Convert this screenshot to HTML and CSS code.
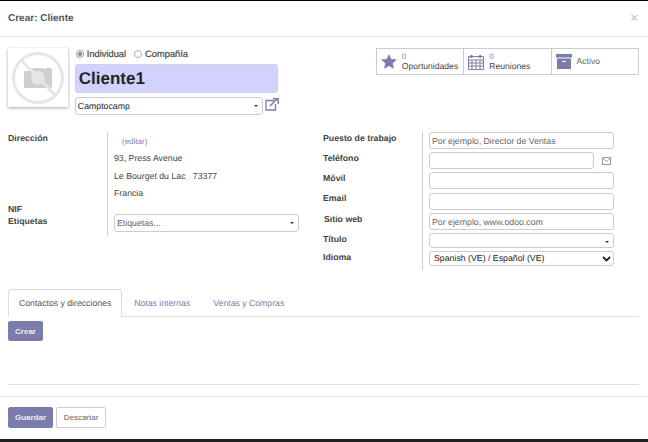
FILE: index.html
```html
<!DOCTYPE html>
<html lang="es">
<head>
  <meta charset="UTF-8">
  <title>Crear: Cliente</title>
  <link rel="stylesheet" href="styles.css">
</head>
<body>
  <div class="modal">
    <header class="modal-header">
      <h4>Crear: Cliente</h4>
      <span class="close">×</span>
    </header>

    <div class="modal-body">
      <div class="top-row">
        <div class="avatar">
          <svg width="54" height="54" viewBox="0 0 54 54">
            <path d="M13 20h6l3-3h10l2 1h1v-1h5v1h1v19H13z" fill="#cfcfcf"/>
            <circle cx="27" cy="27" r="7" fill="#e4e4e4"/>
            <circle cx="27" cy="27" r="24.500" fill="none" stroke="#e6e6e6" stroke-width="3"/>
            <path d="M10 9l35 36" stroke="#e6e6e6" stroke-width="3"/>
          </svg>
        </div>

        <div class="identity">
          <div class="radios">
            <span class="radio checked"></span><span class="radio-label">Individual</span>
            <span class="radio"></span><span class="radio-label">Compañía</span>
          </div>
          <div class="name-input">Cliente1</div>
          <div class="company-row">
            <div class="input company">Camptocamp<span class="caret"></span></div>
            <svg class="ext-link" width="14" height="13" viewBox="0 0 14 13">
              <path d="M9 2.500H1v9.500h9.500V6" fill="none" stroke="#7c7bad" stroke-width="1.300"/>
              <path d="M5 8l7-7M8 .8h5.200V6" fill="none" stroke="#7c7bad" stroke-width="1.500"/>
            </svg>
          </div>
        </div>

        <div class="stats">
          <div class="stat">
            <svg width="16" height="15" viewBox="0 0 16 15">
              <path d="M8 0l2.300 5 5.600.6-4.200 3.700 1.200 5.500L8 12l-4.900 2.800 1.200-5.500L.1 5.600 5.700 5z" fill="#7c7bad"/>
            </svg>
            <div class="stat-text"><span class="num">0</span><span>Oportunidades</span></div>
          </div>
          <div class="stat">
            <svg width="16" height="16" viewBox="0 0 16 16">
              <path d="M.5 2.500h15v13H.5zM.5 6h15M.5 9h15M.5 12h15M4 6v9M8 6v9M12 6v9" fill="none" stroke="#7c7bad"/>
              <path d="M3.500 1v3M12 1v3" stroke="#7c7bad" stroke-width="2"/>
            </svg>
            <div class="stat-text"><span class="num">0</span><span>Reuniones</span></div>
          </div>
          <div class="stat">
            <svg width="16" height="15" viewBox="0 0 16 15">
              <path d="M0 0h16v3.500H0z" fill="#7c7bad"/>
              <path d="M1 4.500h14V15H1z" fill="#7c7bad"/>
              <path d="M6 7h4v1H6z" fill="#fff"/>
            </svg>
            <div class="stat-text active">Activo</div>
          </div>
        </div>
      </div>

      <div class="columns">
        <div class="group group-left">
          <div class="labels">
            <div class="label">Dirección</div>
            <div class="label nif">NIF</div>
            <div class="label">Etiquetas</div>
          </div>
          <div class="values">
            <a class="edit">(editar)</a>
            <div class="addr">93, Press Avenue</div>
            <div class="addr city">Le Bourget du Lac &nbsp; 73377</div>
            <div class="addr">Francia</div>
            <div class="input tags">Etiquetas...<span class="caret"></span></div>
          </div>
        </div>

        <div class="group group-right">
          <div class="labels">
            <div class="label row">Puesto de trabajo</div>
            <div class="label row">Teléfono</div>
            <div class="label row">Móvil</div>
            <div class="label row">Email</div>
            <div class="label row indent">Sitio web</div>
            <div class="label row title">Título</div>
            <div class="label row last">Idioma</div>
          </div>
          <div class="values fields">
            <div class="input placeholder">Por ejemplo, Director de Ventas</div>
            <div class="phone-row">
              <div class="input"></div>
              <svg width="9" height="8" viewBox="0 0 9 8">
                <path d="M.5.5h8v7h-8zM.5 1l4 3.500L8.500 1" fill="none" stroke="#7c7bad" stroke-width="0.800"/>
              </svg>
            </div>
            <div class="input"></div>
            <div class="input email"></div>
            <div class="input placeholder">Por ejemplo, www.odoo.com</div>
            <div class="input short"><span class="caret"></span></div>
            <div class="input short lang">Spanish (VE) / Español (VE)
              <svg width="9" height="6" viewBox="0 0 9 6"><path d="M1 1l3.500 3.500L8 1" fill="none" stroke="#222" stroke-width="1.800"/></svg>
            </div>
          </div>
        </div>
      </div>

      <nav class="tabs">
        <a class="tab current">Contactos y direcciones</a>
        <a class="tab">Notas internas</a>
        <a class="tab">Ventas y Compras</a>
      </nav>
      <div class="tab-pane">
        <button class="btn btn-primary small">Crear</button>
      </div>
    </div>

    <footer class="modal-footer">
      <button class="btn btn-primary">Guardar</button>
      <button class="btn btn-secondary">Descartar</button>
    </footer>
  </div>
  <div class="page-edge"></div>
</body>
</html>
```

FILE: styles.css
```css
html, body {
  margin: 0;
  padding: 0;
  height: 442px;
  overflow: hidden;
  background: #fff;
}

body {
  font-family: "Liberation Sans", Arial, sans-serif;
  font-size: 8.75px;
  color: #4c4c4c;
  text-rendering: geometricPrecision;
  display: flex;
  flex-direction: column;
}

.modal {
  flex: 1;
  border-top: 1px solid #000;
  display: flex;
  flex-direction: column;
}

.modal-header {
  height: 36px;
  box-sizing: border-box;
  padding: 0 10px 3px 8px;
  border-bottom: 1px solid #e5e5e5;
  display: flex;
  justify-content: space-between;
  align-items: center;
}

.modal-header h4 {
  margin: 3px 0 0;
  font-size: 10px;
  font-weight: bold;
  color: #555;
}

.close {
  font-size: 13px;
  font-weight: bold;
  color: #ccc;
}

.modal-body {
  flex: 1;
  padding: 11px 9px 0 8px;
  display: flex;
  flex-direction: column;
}

.top-row {
  display: flex;
  height: 84px;
}

.avatar {
  width: 60px;
  height: 59px;
  box-shadow: 0 1px 3px rgba(0,0,0,0.35);
  display: flex;
  justify-content: center;
  align-items: center;
}

.identity {
  width: 204px;
  margin-left: 1px;
  padding-left: 6px;
}

.radios {
  height: 13px;
  margin-top: -1px;
  display: flex;
  align-items: center;
  font-size: 9.300px;
  color: #444;
  -webkit-text-stroke: 0.2px #444;
}

.radio {
  width: 6px;
  height: 6px;
  border: 1px solid #aaa;
  border-radius: 50%;
  margin: 0 3px 0 1px;
}

.radio.checked {
  background: #888;
  box-shadow: inset 0 0 0 1px #fff;
}

.radio-label {
  margin-right: 7px;
}

.name-input {
  width: 203px;
  height: 29px;
  margin-top: 4px;
  box-sizing: border-box;
  padding-left: 3px;
  background: #d2d2ff;
  border-radius: 3px;
  border: 1px solid #cfcfe8;
  font-size: 17px;
  font-weight: bold;
  line-height: 27px;
  color: #212529;
}

.company-row {
  display: flex;
  align-items: flex-start;
  margin-top: 4px;
}

.input {
  height: 18px;
  box-sizing: border-box;
  padding-left: 2px;
  border: 1px solid #ccc;
  border-radius: 3px;
  line-height: 16px;
  color: #222;
  position: relative;
}

.company {
  width: 188px;
}

.ext-link {
  margin: 1px 0 0 2px;
}

.caret {
  position: absolute;
  right: 4px;
  top: 7px;
  border-top: 2px solid #333;
  border-left: 2px solid transparent;
  border-right: 2px solid transparent;
}

.stats {
  margin-left: 97px;
  display: flex;
  height: 27px;
  border: 1px solid #ccc;
  box-sizing: border-box;
  width: 264px;
}

.stat {
  flex: 1;
  display: flex;
  align-items: center;
  gap: 5px;
  padding-left: 4px;
  border-left: 1px solid #ccc;
}

.stat:first-child {
  border-left: 0;
}

.stat-text {
  display: flex;
  flex-direction: column;
  font-size: 8.600px;
  line-height: 9.5px;
  color: #444;
}

.stat-text .num {
  font-size: 8px;
  color: #7c7bad;
}

.stat-text.active {
  color: #5a6a55;
}

.columns {
  display: flex;
}

.group {
  display: flex;
}

.group-left {
  width: 315px;
}

.group-right {
  width: 300px;
}

.labels {
  font-weight: bold;
  font-size: 8.75px;
  color: #444;
}

.group-left .labels {
  width: 99px;
}

.group-right .labels {
  width: 99px;
}

.label {
  height: 12px;
  line-height: 12px;
}

.nif {
  margin-top: 59px;
}

.label.row {
  height: 20px;
  line-height: 12px;
}

.label.indent {
  padding-left: 1px;
  margin-top: 1px;
}

.label.title {
  height: 18px;
}

.label.last {
  height: 14px;
}

.values {
  border-left: 1px solid #ccc;
  padding-left: 6px;
  box-sizing: border-box;
}

.group-left .values {
  width: 192px;
  height: 104px;
  color: #444;
}

.edit {
  display: block;
  margin: 5px 0 6px 8px;
  font-size: 8px;
  color: #7c7bad;
}

.addr {
  height: 12px;
  line-height: 12px;
  margin-bottom: 5.500px;
}

.tags {
  margin-top: 15px;
  width: 185px;
  height: 18px;
  color: #666;
}

.fields {
  display: flex;
  flex-direction: column;
  gap: 3px;
  width: 193px;
  height: 138px;
}

.fields .input {
  width: 185px;
  height: 17px;
}

.fields .email {
  margin-top: 1px;
}

.placeholder {
  color: #666;
}

.phone-row {
  display: flex;
  align-items: center;
  gap: 8px;
}

.fields .phone-row .input {
  width: 165px;
}

.fields .short {
  height: 15px;
  line-height: 13px;
}

.lang {
  display: flex;
  justify-content: space-between;
  align-items: center;
  padding: 0 2px 0 4px;
  color: #222;
}

.tabs {
  margin-top: 19px;
  display: flex;
  gap: 1px;
  border-bottom: 1px solid #ddd;
  height: 28px;
  box-sizing: border-box;
}

.tab {
  padding: 0 10px;
  height: 28px;
  box-sizing: border-box;
  font-size: 8.700px;
  line-height: 26px;
  color: #7c7bad;
  border: 1px solid transparent;
}

.tab.current {
  color: #555;
  background: #fff;
  border-color: #ddd #ddd #fff;
  border-radius: 3px 3px 0 0;
}

.tab-pane {
  flex: 1;
  padding-top: 4px;
  border-bottom: 1px solid #ddd;
  margin-bottom: 11px;
}

.btn {
  display: block;
  font-family: inherit;
  border-radius: 2px;
  cursor: pointer;
  font-size: 8px;
  font-weight: bold;
  height: 21px;
  padding: 0;
}

.btn-primary {
  background: #7c7bad;
  color: #eee;
  border: 1px solid #7c7bad;
  width: 45px;
}

.btn-primary.small {
  width: 35px;
  height: 20px;
}

.btn-secondary {
  background: #fff;
  color: #666;
  border: 1px solid #ccc;
  width: 50px;
  font-weight: normal;
}

.modal-footer {
  height: 43px;
  box-sizing: border-box;
  border-top: 1px solid #e5e5e5;
  padding: 10px 8px 0;
  display: flex;
  gap: 3px;
}

.page-edge {
  height: 3px;
  background: #222;
}
```
